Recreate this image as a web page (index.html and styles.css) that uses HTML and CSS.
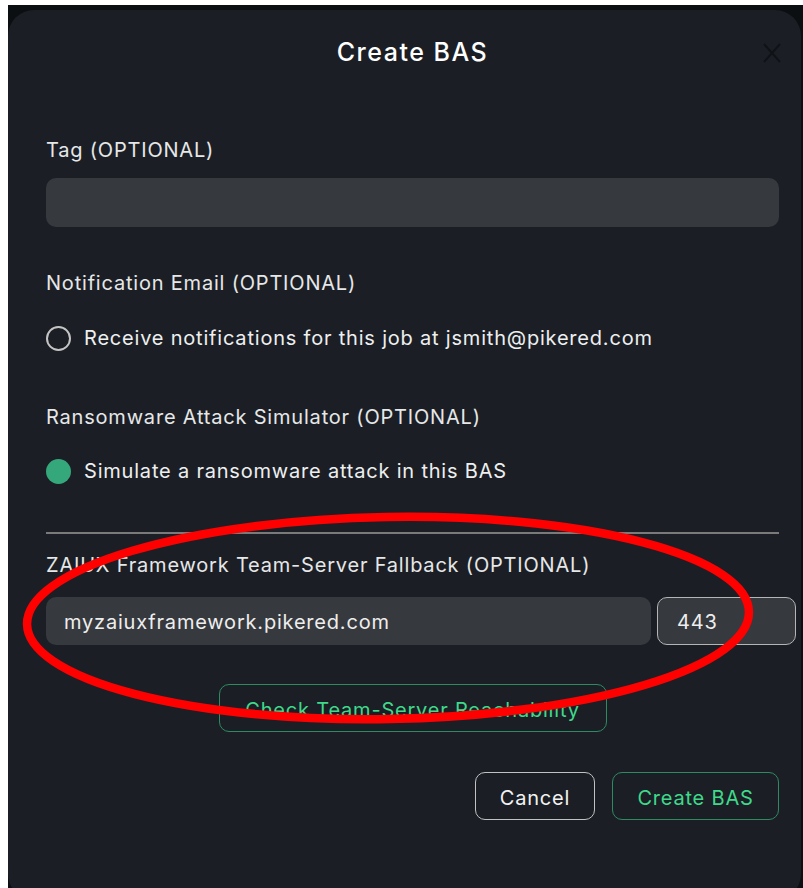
FILE: index.html
```html
<!DOCTYPE html>
<html lang="en">
<head>
<meta charset="utf-8">
<title>Create BAS</title>
<link rel="stylesheet" href="styles.css">
</head>
<body>
<div class="backdrop">
  <div class="dialog">
    <header class="dialog-head">
      <h1 class="dialog-title">Create BAS</h1>
      <button class="close" aria-label="Close">
        <svg width="18" height="20" viewBox="0 0 18 20"><path d="M1 1 L17 19 M17 1 L1 19" stroke="currentColor" stroke-width="2" fill="none"/></svg>
      </button>
    </header>

    <div class="body">
      <label class="label label-tag">Tag (OPTIONAL)</label>
      <div class="field field-tag"></div>

      <label class="label label-gap">Notification Email (OPTIONAL)</label>
      <div class="choice">
        <span class="radio"></span>
        <span>Receive notifications for this job at jsmith@pikered.com</span>
      </div>

      <label class="label label-ransom">Ransomware Attack Simulator (OPTIONAL)</label>
      <div class="choice choice-ransom">
        <span class="radio radio-on"></span>
        <span>Simulate a ransomware attack in this BAS</span>
      </div>

      <hr class="divider">

      <label class="label label-zaiux">ZAIUX Framework Team-Server Fallback (OPTIONAL)</label>
      <div class="server-row">
        <div class="field field-host">myzaiuxframework.pikered.com</div>
        <div class="field field-port">443</div>
      </div>

      <div class="check-row">
        <button class="btn btn-green btn-check">Check Team-Server Reachability</button>
      </div>

      <div class="actions">
        <button class="btn btn-plain">Cancel</button>
        <button class="btn btn-green btn-create">Create BAS</button>
      </div>
    </div>

    <svg class="markup" width="780" height="240" viewBox="0 0 780 240">
      <ellipse cx="380" cy="110" rx="361" ry="101" transform="rotate(-1 380 110)" fill="none" stroke="#ff0000" stroke-width="8.5"/>
    </svg>
  </div>
</div>
</body>
</html>
```

FILE: styles.css
```css
* { box-sizing: border-box; }

html, body {
  margin: 0;
  height: 100%;
  background: #ffffff;
  overflow: hidden;
}

body {
  font-family: Inter, "Noto Sans", sans-serif;
  color: #e6e7e8;
  letter-spacing: 0.8px;
}

.backdrop {
  margin: 5px 0 0 8px;
  height: calc(100% - 5px);
  background: #0b0f11;
  padding-top: 5px;
}

.dialog {
  position: relative;
  width: 793px;
  height: 890px;
  background: #1b1f25;
  border-radius: 26px;
}

.dialog-head {
  position: relative;
  padding-top: 27px;
  text-align: center;
  padding-left: 16px;
}

.dialog-title {
  margin: 0;
  font-size: 25px;
  line-height: 30px;
  font-weight: 500;
  letter-spacing: 1.5px;
  color: #ffffff;
}

.close {
  position: absolute;
  right: 20px;
  top: 33px;
  background: none;
  border: 0;
  padding: 0;
  color: #0f1317;
  line-height: 0;
}

.body {
  padding: 0 22px 0 38px;
  display: flex;
  flex-direction: column;
}

.label {
  display: block;
  font-size: 20px;
  line-height: 24px;
  color: #e6e7e8;
}

.label-tag { margin-top: 71px; }
.label-gap { margin-top: 44px; }
.label-ransom { margin-top: 54px; }
.label-zaiux { margin-top: 19px; }

.field {
  background: #36393d;
  border-radius: 10px;
  height: 49px;
  font-size: 20px;
  color: #eeeeee;
  display: flex;
  align-items: center;
}

.field-tag {
  margin-top: 16px;
}

.choice {
  display: flex;
  align-items: center;
  gap: 13px;
  margin-top: 30px;
  height: 26px;
  font-size: 20px;
  color: #eeeff0;
}

.choice-ransom { margin-top: 29px; }

.radio {
  width: 25px;
  height: 25px;
  border-radius: 50%;
  border: 2px solid #c4c4c4;
  flex: none;
}

.radio-on {
  border: 0;
  background: #35a87b;
}

.divider {
  margin: 48px 0 0;
  border: 0;
  height: 2px;
  background: #7a7a7a;
}

.server-row {
  display: flex;
  gap: 6px;
  margin-top: 20px;
  margin-right: -17px;
}

.field-host {
  width: 605px;
  height: 48px;
  padding: 2px 0 0 18px;
}

.field-port {
  flex: 1;
  height: 48px;
  padding: 2px 0 0 19px;
  border: 1.5px solid #b5b5b5;
}

.check-row {
  display: flex;
  justify-content: center;
  margin-top: 39px;
}

.btn {
  font-family: inherit;
  font-size: 20px;
  letter-spacing: 0.8px;
  height: 48px;
  border-radius: 10px;
  background: transparent;
  padding: 4px 0 0;
}

.btn-green {
  border: 1.5px solid #2e8a63;
  color: #3fd98b;
}

.btn-check {
  width: 388px;
}

.actions {
  display: flex;
  justify-content: flex-end;
  gap: 17px;
  margin-top: 40px;
}

.btn-plain {
  width: 120px;
  border: 1.5px solid #c2c2c2;
  color: #f2f2f2;
}

.btn-create {
  width: 167px;
}

.markup {
  position: absolute;
  left: 0;
  top: 498px;
  pointer-events: none;
}
```
